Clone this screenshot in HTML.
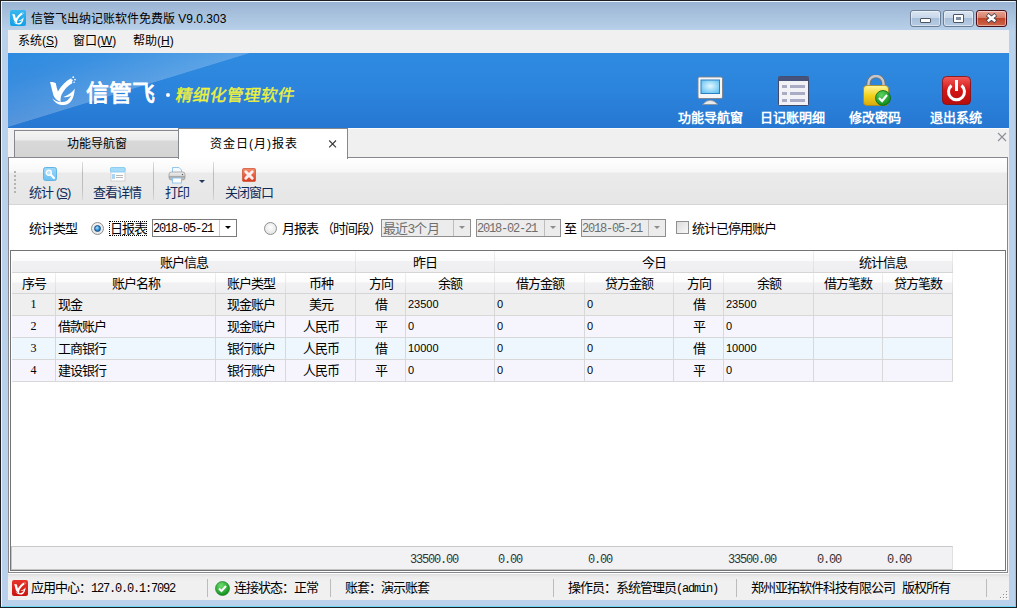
<!DOCTYPE html><html lang="zh-CN"><head><meta charset="utf-8"><style>
*{box-sizing:border-box;margin:0;padding:0}
html,body{width:1017px;height:608px;overflow:hidden;background:#b9d1ea;font-family:"Liberation Sans",sans-serif;font-size:12px;color:#000}
.abs{position:absolute}
.t{position:absolute;white-space:nowrap;line-height:14px}
.mono{font-family:"Liberation Mono",monospace}
.ss{font-size:13px;letter-spacing:-1px}
</style></head><body>
<div class="abs" style="left:0;top:0;width:1017px;height:608px;border:1px solid #1d1f22;background:#b9d1ea"></div>
<div class="abs" style="left:1px;top:1px;width:1015px;height:606px;border:1px solid #eef4fb;border-right-color:#6ad6f3;border-bottom-color:#6ad6f3;background:linear-gradient(#99b4d3 0px,#a9c2de 14px,#bad2ea 30px,#b9d1ea 40px)"></div>
<div class="abs" style="left:10px;top:10px;width:16px;height:16px;border-radius:2px;background:linear-gradient(#3ab7f0,#11a0e6)"></div>
<svg class="abs" style="left:10px;top:10px" width="16" height="16" viewBox="0 0 16 16"><path d="M2.3,4.1 C3.2,4 4.2,4.2 4.9,4.6 C5.2,6 5.5,7.3 5.9,8.4 C7.5,5.8 9.5,3.6 12,2.4 C12.3,3.2 12.5,3.9 12.5,4.6 C10.5,5.8 8.8,7.6 7.6,9.8 C7.2,10.8 7,11.8 7.2,13.2 C5.5,12.6 4.3,11.5 3.8,10 C3.2,8 2.8,6 2.3,4.1 Z" fill="#fff"/><path d="M3.3,11.6 C4.5,13.6 6.3,14.6 8.5,14.6 C11.3,14.6 13.3,12.2 13.6,7.2 C12.5,8.8 10.6,10.2 8.4,11 C9.8,11.3 11,10.9 12,10.3 C11,12.3 9.5,13.3 7.8,13.3 C6,13.3 4.5,12.6 3.3,11.6 Z" fill="#fff"/><circle cx="12.9" cy="2.2" r="0.45" fill="#fff" opacity="0.8"/><circle cx="13.7" cy="3.3" r="0.45" fill="#fff" opacity="0.8"/></svg>
<div class="t" style="left:31px;top:12px;font-size:12px;color:#000">信管飞出纳记账软件免费版 V9.0.303</div>
<div class="abs" style="left:910px;top:10px;width:31px;height:17px;border:1px solid #6d7e94;border-radius:3px;background:linear-gradient(#d9e5f2 0,#c8d8ea 45%,#a9bfd9 50%,#b7cce4 100%);box-shadow:inset 0 0 0 1px rgba(255,255,255,0.45)"></div>
<div class="abs" style="left:920px;top:18px;width:11px;height:5px;background:#fff;border:1px solid #4a5565;border-radius:1px"></div>
<div class="abs" style="left:943px;top:10px;width:31px;height:17px;border:1px solid #6d7e94;border-radius:3px;background:linear-gradient(#d9e5f2 0,#c8d8ea 45%,#a9bfd9 50%,#b7cce4 100%);box-shadow:inset 0 0 0 1px rgba(255,255,255,0.45)"></div>
<div class="abs" style="left:953px;top:14px;width:11px;height:9px;background:#fff;border:1px solid #4a5565;border-radius:1px"></div><div class="abs" style="left:956px;top:17px;width:5px;height:3px;background:#7d8ea4"></div>
<div class="abs" style="left:976px;top:10px;width:31px;height:17px;border:1px solid #4a0e18;border-radius:3px;background:linear-gradient(#e8a493 0,#d47f69 45%,#c0442a 50%,#d0664a 100%);box-shadow:inset 0 0 0 1px rgba(255,255,255,0.45)"></div>
<svg class="abs" style="left:976px;top:10px" width="31" height="17" viewBox="0 0 31 17"><path d="M11.2 4.6 L19.8 11.6 M19.8 4.6 L11.2 11.6" stroke="#3d3a48" stroke-width="4" stroke-linecap="butt"/><path d="M11.7 5 L19.3 11.2 M19.3 5 L11.7 11.2" stroke="#fff" stroke-width="2.6" stroke-linecap="butt"/></svg>
<div class="abs" style="left:8px;top:30px;width:1001px;height:570px;background:#f0f0f0"></div>
<div class="abs" style="left:8px;top:30px;width:1001px;height:23px;background:#f0f0f0"></div>
<div class="t" style="left:18px;top:34px;font-size:12px">系统(<u>S</u>)</div>
<div class="t" style="left:73px;top:34px;font-size:12px">窗口(<u>W</u>)</div>
<div class="t" style="left:133px;top:34px;font-size:12px">帮助(<u>H</u>)</div>
<div class="abs" style="left:8px;top:53px;width:1001px;height:75px;overflow:hidden;background:linear-gradient(163deg,rgba(255,255,255,0) 0%,rgba(255,255,255,0.06) 8%,rgba(255,255,255,0.22) 19.3%,rgba(255,255,255,0) 19.5%),linear-gradient(#2e8be0 0%,#2c84dc 50%,#2677d1 100%)"></div>
<svg class="abs" style="left:45px;top:73px" width="35" height="35" viewBox="0 0 16 16"><path d="M2.3,4.1 C3.2,4 4.2,4.2 4.9,4.6 C5.2,6 5.5,7.3 5.9,8.4 C7.5,5.8 9.5,3.6 12,2.4 C12.3,3.2 12.5,3.9 12.5,4.6 C10.5,5.8 8.8,7.6 7.6,9.8 C7.2,10.8 7,11.8 7.2,13.2 C5.5,12.6 4.3,11.5 3.8,10 C3.2,8 2.8,6 2.3,4.1 Z" fill="#fff"/><path d="M3.3,11.6 C4.5,13.6 6.3,14.6 8.5,14.6 C11.3,14.6 13.3,12.2 13.6,7.2 C12.5,8.8 10.6,10.2 8.4,11 C9.8,11.3 11,10.9 12,10.3 C11,12.3 9.5,13.3 7.8,13.3 C6,13.3 4.5,12.6 3.3,11.6 Z" fill="#fff"/><circle cx="12.9" cy="1.9" r="0.4" fill="#fff"/><circle cx="13.7" cy="3" r="0.4" fill="#fff"/><circle cx="12.4" cy="3.3" r="0.35" fill="#fff"/><circle cx="13.3" cy="4.2" r="0.35" fill="#fff"/><circle cx="12" cy="4.5" r="0.3" fill="#fff"/></svg>
<div class="t" style="left:86px;top:80px;font-size:23px;line-height:26px;letter-spacing:1px;color:#fff;font-weight:normal;-webkit-text-stroke:0.9px #fff;letter-spacing:0px">信管飞</div>
<div class="abs" style="left:166px;top:93px;width:4px;height:4px;background:#fff;border-radius:50%"></div>
<div class="t" style="left:174px;top:86px;font-size:16.5px;line-height:18px;color:#eef23a;font-weight:normal;-webkit-text-stroke:0.4px #eef23a;transform:skewX(-10deg);transform-origin:0 100%">精细化管理软件</div>
<svg class="abs" style="left:697px;top:76px" width="28" height="30" viewBox="0 0 28 30"><defs><radialGradient id="scr" cx="0.5" cy="0.45" r="0.7"><stop offset="0" stop-color="#e2f7ff"/><stop offset="1" stop-color="#5cc0f2"/></radialGradient></defs><rect x="1" y="1" width="24.5" height="21.5" rx="1.5" fill="#f4f6f8" stroke="#7d8186" stroke-width="0.9"/><rect x="3.5" y="3.5" width="19.5" height="14.5" fill="#2a7fc2"/><rect x="4.5" y="4.5" width="17.5" height="12.5" fill="url(#scr)"/><path d="M5.5 28.5 Q13.25 20 21 28.5 Z" fill="#e8eaec" stroke="#8a8e93" stroke-width="0.8"/></svg>
<div class="t" style="left:670px;width:80px;text-align:center;top:110px;font-size:13px;line-height:16px;color:#fff;font-weight:bold">功能导航窗</div>
<svg class="abs" style="left:778px;top:76px" width="31" height="30" viewBox="0 0 31 30"><rect x="0.5" y="0.5" width="30" height="29" rx="1" fill="#f2f2f6" stroke="#3f4a6a"/><rect x="0.5" y="0.5" width="30" height="4.5" fill="#46527a"/><rect x="4" y="9" width="5" height="3" fill="#a9acc4"/><rect x="12" y="9" width="15" height="3" fill="#a9acc4"/><rect x="4" y="16" width="5" height="3" fill="#a9acc4"/><rect x="12" y="16" width="15" height="3" fill="#a9acc4"/><rect x="4" y="23" width="5" height="3" fill="#a9acc4"/><rect x="12" y="23" width="15" height="3" fill="#a9acc4"/></svg>
<div class="t" style="left:752px;width:80px;text-align:center;top:110px;font-size:13px;line-height:16px;color:#fff;font-weight:bold">日记账明细</div>
<svg class="abs" style="left:862px;top:75px" width="30" height="32" viewBox="0 0 30 32"><defs><linearGradient id="lk" x1="0" y1="0" x2="0" y2="1"><stop offset="0" stop-color="#fff7a0"/><stop offset="0.5" stop-color="#f2d21c"/><stop offset="1" stop-color="#d9a90c"/></linearGradient><radialGradient id="gc" cx="0.4" cy="0.3" r="0.7"><stop offset="0" stop-color="#5fd35f"/><stop offset="1" stop-color="#0d8a1a"/></radialGradient></defs><path d="M6.5 12 V8.5 A7.5 7.5 0 0 1 21.5 8.5 V12" fill="none" stroke="#6f7378" stroke-width="4.2"/><path d="M6.5 12 V8.5 A7.5 7.5 0 0 1 21.5 8.5 V12" fill="none" stroke="#c4c7cb" stroke-width="2.4"/><rect x="1.5" y="10.5" width="25" height="20" rx="3.5" fill="url(#lk)" stroke="#b08a10" stroke-width="0.8"/><circle cx="21" cy="23" r="7.5" fill="url(#gc)" stroke="#0a6a12" stroke-width="0.8"/><path d="M17 23 L20 26 L25 20" fill="none" stroke="#fff" stroke-width="2.2"/></svg>
<div class="t" style="left:835px;width:80px;text-align:center;top:110px;font-size:13px;line-height:16px;color:#fff;font-weight:bold">修改密码</div>
<svg class="abs" style="left:942px;top:76px" width="30" height="30" viewBox="0 0 30 30"><defs><linearGradient id="pw" x1="0" y1="0" x2="0" y2="1"><stop offset="0" stop-color="#f25b5b"/><stop offset="0.5" stop-color="#d41414"/><stop offset="1" stop-color="#b50d0d"/></linearGradient></defs><rect x="0.5" y="0.5" width="28" height="28" rx="4" fill="url(#pw)" stroke="#8a0a0a" stroke-width="0.8"/><path d="M9.5 9.5 A8 8 0 1 0 19.5 9.5" fill="none" stroke="#fff" stroke-width="3"/><rect x="13" y="4" width="3" height="11" fill="#fff"/></svg>
<div class="t" style="left:916px;width:80px;text-align:center;top:110px;font-size:13px;line-height:16px;color:#fff;font-weight:bold">退出系统</div>
<div class="abs" style="left:8px;top:128px;width:1001px;height:30px;background:#f0f0f0;border-top:1px solid #fafafa"></div>
<div class="abs" style="left:14px;top:130px;width:165px;height:28px;border:1px solid #85888f;border-bottom:none;background:linear-gradient(#f4f4f4 0,#ececec 9px,#d8d8d8 10px,#d4d4d4 100%)"></div>
<div class="t" style="left:14px;width:165px;text-align:center;top:137px">功能导航窗</div>
<div class="abs" style="left:178px;top:128px;width:170px;height:31px;border:1px solid #85888f;border-bottom:none;background:#fff;z-index:2"></div>
<div class="t" style="left:210px;top:137px;z-index:3;letter-spacing:1px">资金日(月)报表</div>
<svg class="abs" style="left:328px;top:139px;z-index:3" width="10" height="10" viewBox="0 0 10 10"><path d="M1.2 1.5 L8 8.3 M8 1.5 L1.2 8.3" stroke="#3a3a3a" stroke-width="1.15"/></svg>
<svg class="abs" style="left:997px;top:132px" width="10" height="10" viewBox="0 0 10 10"><path d="M1 1 L9 9 M9 1 L1 9" stroke="#8a8f96" stroke-width="1.1"/></svg>
<div class="abs" style="left:8px;top:157px;width:1000px;height:416px;border:1px solid #85888f;border-bottom:none;background:#fff"></div>
<div class="abs" style="left:9px;top:158px;width:998px;height:47px;background:linear-gradient(#ffffff 0,#f7f7f7 14px,#ebebeb 15px,#e6e6e6 100%);border-bottom:1px solid #d5d5d5"></div>
<div class="abs" style="left:14px;top:171px;width:2px;height:22px;background:repeating-linear-gradient(#b4b4b4 0,#b4b4b4 2px,transparent 2px,transparent 4px)"></div>
<div class="abs" style="left:82px;top:162px;width:1px;height:38px;background:linear-gradient(#e0e0e0,#bdbdbd 30%,#bdbdbd 70%,#d8d8d8)"></div>
<div class="abs" style="left:153px;top:162px;width:1px;height:38px;background:linear-gradient(#e0e0e0,#bdbdbd 30%,#bdbdbd 70%,#d8d8d8)"></div>
<div class="abs" style="left:213px;top:162px;width:1px;height:38px;background:linear-gradient(#e0e0e0,#bdbdbd 30%,#bdbdbd 70%,#d8d8d8)"></div>
<div class="t ss" style="left:29px;top:186px;color:#0f2a58">统计<span style="margin-left:3px">(<u>S</u>)</span></div>
<div class="t ss" style="left:93px;top:186px;color:#0f2a58">查看详情</div>
<div class="t ss" style="left:165px;top:186px;color:#0f2a58">打印</div>
<div class="t ss" style="left:225px;top:186px;color:#0f2a58">关闭窗口</div>
<svg class="abs" style="left:43px;top:167px" width="14" height="14" viewBox="0 0 14 14"><defs><linearGradient id="sg" x1="0" y1="0" x2="0" y2="1"><stop offset="0" stop-color="#9fd8f8"/><stop offset="1" stop-color="#6cc0f2"/></linearGradient></defs><rect x="0.5" y="0.5" width="13" height="13" rx="2" fill="url(#sg)" stroke="#62b4e6"/><circle cx="5.8" cy="5.8" r="2.6" fill="#bfe6fb" stroke="#fff" stroke-width="1.3"/><path d="M7.8 7.8 L11 11" stroke="#fff" stroke-width="2.2" stroke-linecap="round"/></svg>
<svg class="abs" style="left:110px;top:167px" width="16" height="15" viewBox="0 0 16 15"><rect x="1" y="1.5" width="14" height="12.5" fill="#fff" stroke="#c8c8c8" stroke-width="0.8"/><rect x="0.5" y="0.5" width="14.5" height="4.5" rx="1" fill="#a7dcf8" stroke="#7cc4ee" stroke-width="0.8"/><rect x="2" y="7" width="3" height="5" fill="#a9d6f2"/><rect x="6" y="8" width="7" height="1" fill="#b8b8b8"/><rect x="6" y="10" width="7" height="1" fill="#b8b8b8"/></svg>
<svg class="abs" style="left:168px;top:166px" width="18" height="18" viewBox="0 0 18 18"><defs><linearGradient id="pb" x1="0" y1="0" x2="0" y2="1"><stop offset="0" stop-color="#f2f2f2"/><stop offset="0.45" stop-color="#d9d9d9"/><stop offset="0.55" stop-color="#a9a9a9"/><stop offset="1" stop-color="#c9c9c9"/></linearGradient></defs><path d="M4.5 1.5 H11 L13.5 4 V7 H4.5 Z" fill="#f4f9ff" stroke="#8cc0ec" stroke-width="0.9"/><rect x="1" y="6" width="16" height="8" rx="2.5" fill="url(#pb)" stroke="#9a9a9a" stroke-width="0.8"/><circle cx="14.5" cy="8.5" r="0.7" fill="#555"/><rect x="4.5" y="12" width="9" height="5" fill="#fff" stroke="#8cc0ec" stroke-width="0.9"/></svg>
<div class="abs" style="left:199px;top:180px;width:0;height:0;border-left:3px solid transparent;border-right:3px solid transparent;border-top:3px solid #1e395b"></div>
<svg class="abs" style="left:242px;top:168px" width="14" height="14" viewBox="0 0 14 14"><defs><linearGradient id="cx" x1="0" y1="0" x2="0" y2="1"><stop offset="0" stop-color="#f58a6a"/><stop offset="1" stop-color="#d83a1f"/></linearGradient></defs><rect x="0.5" y="0.5" width="13" height="13" rx="1.2" fill="url(#cx)" stroke="#d0573a" stroke-width="0.8"/><path d="M3.8 3.8 L10.2 10.2 M10.2 3.8 L3.8 10.2" stroke="#fbeeee" stroke-width="3" stroke-linecap="round"/></svg>
<div class="t ss" style="left:29px;top:222px">统计类型</div>
<div class="abs" style="left:91px;top:222px;width:13px;height:13px;border-radius:50%;border:1px solid #8e8f8f;background:radial-gradient(circle at 50% 40%,#ffffff,#dcdcdc)"></div>
<div class="abs" style="left:94px;top:225px;width:7px;height:7px;border-radius:50%;border:1px solid #15467e;background:radial-gradient(circle at 40% 35%,#aee4ff,#2a8fd6 55%,#0e5aa3)"></div>
<div class="abs" style="left:109px;top:221px;width:38px;height:15px;border:1px dotted #000"></div>
<div class="t ss" style="left:110px;top:222px">日报表</div>
<div class="abs" style="left:152px;top:219px;width:85px;height:18px;border:1px solid #7a7a7a;background:#fff"></div>
<div class="abs" style="left:219px;top:220px;width:1px;height:16px;background:#c8c8c8"></div>
<div class="abs" style="left:225px;top:226px;width:0;height:0;border-left:3px solid transparent;border-right:3px solid transparent;border-top:3px solid #000"></div>
<div class="t mono" style="left:153px;top:222px;font-size:12px;letter-spacing:-1.2px;color:#000">2018-05-21</div>
<div class="abs" style="left:264px;top:222px;width:13px;height:13px;border-radius:50%;border:1px solid #8e8f8f;background:radial-gradient(circle at 50% 40%,#ffffff,#dcdcdc)"></div>
<div class="t ss" style="left:282px;top:222px;letter-spacing:-1px">月报表<span style="margin-left:3px">（时间段）</span></div>
<div class="abs" style="left:381px;top:219px;width:90px;height:18px;border:1px solid #8e8e8e;background:#ececec"></div>
<div class="abs" style="left:453px;top:220px;width:1px;height:16px;background:#bdbdbd"></div>
<div class="abs" style="left:459px;top:226px;width:0;height:0;border-left:3px solid transparent;border-right:3px solid transparent;border-top:3px solid #8d8d8d"></div>
<div class="t" style="left:383px;top:222px;font-size:13px;letter-spacing:-0.6px;color:#6e6e6e">最近3个月</div>
<div class="abs" style="left:476px;top:219px;width:85px;height:18px;border:1px solid #8e8e8e;background:#ececec"></div>
<div class="abs" style="left:544px;top:220px;width:1px;height:16px;background:#bdbdbd"></div>
<div class="abs" style="left:550px;top:226px;width:0;height:0;border-left:3px solid transparent;border-right:3px solid transparent;border-top:3px solid #8d8d8d"></div>
<div class="t mono" style="left:477px;top:222px;font-size:12px;letter-spacing:-1.2px;color:#6e6e6e">2018-02-21</div>
<div class="t ss" style="left:564px;top:222px">至</div>
<div class="abs" style="left:581px;top:219px;width:85px;height:18px;border:1px solid #8e8e8e;background:#ececec"></div>
<div class="abs" style="left:648px;top:220px;width:1px;height:16px;background:#bdbdbd"></div>
<div class="abs" style="left:654px;top:226px;width:0;height:0;border-left:3px solid transparent;border-right:3px solid transparent;border-top:3px solid #8d8d8d"></div>
<div class="t mono" style="left:582px;top:222px;font-size:12px;letter-spacing:-1.2px;color:#6e6e6e">2018-05-21</div>
<div class="abs" style="left:676px;top:221px;width:13px;height:13px;border:1px solid #8e8f8f;background:linear-gradient(135deg,#dcdcdc,#f8f8f8)"></div>
<div class="t ss" style="left:692px;top:222px">统计已停用账户</div>
<div class="abs" style="left:10px;top:250px;width:996px;height:321px;border:1px solid #747474;background:#fff"></div>
<div class="abs" style="left:8px;top:572px;width:1000px;height:1px;background:#85888f"></div>
<div class="abs" style="left:12px;top:251px;width:344px;height:22px;background:linear-gradient(#ffffff 0,#fcfcfc 45%,#f1f1f3 50%,#efeff2 100%);border-bottom:1px solid #d5d5d5"></div>
<div class="abs" style="left:355px;top:251px;width:1px;height:21px;background:linear-gradient(#f0f0f0,#dcdcdc)"></div>
<div class="t ss" style="left:12px;width:343px;text-align:center;top:256px">账户信息</div>
<div class="abs" style="left:356px;top:251px;width:139px;height:22px;background:linear-gradient(#ffffff 0,#fcfcfc 45%,#f1f1f3 50%,#efeff2 100%);border-bottom:1px solid #d5d5d5"></div>
<div class="abs" style="left:494px;top:251px;width:1px;height:21px;background:linear-gradient(#f0f0f0,#dcdcdc)"></div>
<div class="t ss" style="left:356px;width:138px;text-align:center;top:256px">昨日</div>
<div class="abs" style="left:495px;top:251px;width:319px;height:22px;background:linear-gradient(#ffffff 0,#fcfcfc 45%,#f1f1f3 50%,#efeff2 100%);border-bottom:1px solid #d5d5d5"></div>
<div class="abs" style="left:813px;top:251px;width:1px;height:21px;background:linear-gradient(#f0f0f0,#dcdcdc)"></div>
<div class="t ss" style="left:495px;width:318px;text-align:center;top:256px">今日</div>
<div class="abs" style="left:814px;top:251px;width:139px;height:22px;background:linear-gradient(#ffffff 0,#fcfcfc 45%,#f1f1f3 50%,#efeff2 100%);border-bottom:1px solid #d5d5d5"></div>
<div class="abs" style="left:952px;top:251px;width:1px;height:21px;background:linear-gradient(#f0f0f0,#dcdcdc)"></div>
<div class="t ss" style="left:814px;width:138px;text-align:center;top:256px">统计信息</div>
<div class="abs" style="left:12px;top:273px;width:44px;height:21px;background:linear-gradient(#ffffff 0,#fcfcfc 45%,#f1f1f3 50%,#efeff2 100%);border-bottom:1px solid #d5d5d5"></div>
<div class="abs" style="left:55px;top:273px;width:1px;height:20px;background:linear-gradient(#f0f0f0,#dcdcdc)"></div>
<div class="t ss" style="left:12px;width:43px;text-align:center;top:277px">序号</div>
<div class="abs" style="left:56px;top:273px;width:160px;height:21px;background:linear-gradient(#ffffff 0,#fcfcfc 45%,#f1f1f3 50%,#efeff2 100%);border-bottom:1px solid #d5d5d5"></div>
<div class="abs" style="left:215px;top:273px;width:1px;height:20px;background:linear-gradient(#f0f0f0,#dcdcdc)"></div>
<div class="t ss" style="left:56px;width:159px;text-align:center;top:277px">账户名称</div>
<div class="abs" style="left:216px;top:273px;width:70px;height:21px;background:linear-gradient(#ffffff 0,#fcfcfc 45%,#f1f1f3 50%,#efeff2 100%);border-bottom:1px solid #d5d5d5"></div>
<div class="abs" style="left:285px;top:273px;width:1px;height:20px;background:linear-gradient(#f0f0f0,#dcdcdc)"></div>
<div class="t ss" style="left:216px;width:69px;text-align:center;top:277px">账户类型</div>
<div class="abs" style="left:286px;top:273px;width:70px;height:21px;background:linear-gradient(#ffffff 0,#fcfcfc 45%,#f1f1f3 50%,#efeff2 100%);border-bottom:1px solid #d5d5d5"></div>
<div class="abs" style="left:355px;top:273px;width:1px;height:20px;background:linear-gradient(#f0f0f0,#dcdcdc)"></div>
<div class="t ss" style="left:286px;width:69px;text-align:center;top:277px">币种</div>
<div class="abs" style="left:356px;top:273px;width:50px;height:21px;background:linear-gradient(#ffffff 0,#fcfcfc 45%,#f1f1f3 50%,#efeff2 100%);border-bottom:1px solid #d5d5d5"></div>
<div class="abs" style="left:405px;top:273px;width:1px;height:20px;background:linear-gradient(#f0f0f0,#dcdcdc)"></div>
<div class="t ss" style="left:356px;width:49px;text-align:center;top:277px">方向</div>
<div class="abs" style="left:406px;top:273px;width:89px;height:21px;background:linear-gradient(#ffffff 0,#fcfcfc 45%,#f1f1f3 50%,#efeff2 100%);border-bottom:1px solid #d5d5d5"></div>
<div class="abs" style="left:494px;top:273px;width:1px;height:20px;background:linear-gradient(#f0f0f0,#dcdcdc)"></div>
<div class="t ss" style="left:406px;width:88px;text-align:center;top:277px">余额</div>
<div class="abs" style="left:495px;top:273px;width:90px;height:21px;background:linear-gradient(#ffffff 0,#fcfcfc 45%,#f1f1f3 50%,#efeff2 100%);border-bottom:1px solid #d5d5d5"></div>
<div class="abs" style="left:584px;top:273px;width:1px;height:20px;background:linear-gradient(#f0f0f0,#dcdcdc)"></div>
<div class="t ss" style="left:495px;width:89px;text-align:center;top:277px">借方金额</div>
<div class="abs" style="left:585px;top:273px;width:89px;height:21px;background:linear-gradient(#ffffff 0,#fcfcfc 45%,#f1f1f3 50%,#efeff2 100%);border-bottom:1px solid #d5d5d5"></div>
<div class="abs" style="left:673px;top:273px;width:1px;height:20px;background:linear-gradient(#f0f0f0,#dcdcdc)"></div>
<div class="t ss" style="left:585px;width:88px;text-align:center;top:277px">贷方金额</div>
<div class="abs" style="left:674px;top:273px;width:50px;height:21px;background:linear-gradient(#ffffff 0,#fcfcfc 45%,#f1f1f3 50%,#efeff2 100%);border-bottom:1px solid #d5d5d5"></div>
<div class="abs" style="left:723px;top:273px;width:1px;height:20px;background:linear-gradient(#f0f0f0,#dcdcdc)"></div>
<div class="t ss" style="left:674px;width:49px;text-align:center;top:277px">方向</div>
<div class="abs" style="left:724px;top:273px;width:90px;height:21px;background:linear-gradient(#ffffff 0,#fcfcfc 45%,#f1f1f3 50%,#efeff2 100%);border-bottom:1px solid #d5d5d5"></div>
<div class="abs" style="left:813px;top:273px;width:1px;height:20px;background:linear-gradient(#f0f0f0,#dcdcdc)"></div>
<div class="t ss" style="left:724px;width:89px;text-align:center;top:277px">余额</div>
<div class="abs" style="left:814px;top:273px;width:69px;height:21px;background:linear-gradient(#ffffff 0,#fcfcfc 45%,#f1f1f3 50%,#efeff2 100%);border-bottom:1px solid #d5d5d5"></div>
<div class="abs" style="left:882px;top:273px;width:1px;height:20px;background:linear-gradient(#f0f0f0,#dcdcdc)"></div>
<div class="t ss" style="left:814px;width:68px;text-align:center;top:277px">借方笔数</div>
<div class="abs" style="left:883px;top:273px;width:70px;height:21px;background:linear-gradient(#ffffff 0,#fcfcfc 45%,#f1f1f3 50%,#efeff2 100%);border-bottom:1px solid #d5d5d5"></div>
<div class="abs" style="left:952px;top:273px;width:1px;height:20px;background:linear-gradient(#f0f0f0,#dcdcdc)"></div>
<div class="t ss" style="left:883px;width:69px;text-align:center;top:277px">贷方笔数</div>
<div class="abs" style="left:12px;top:294px;width:44px;height:22px;background:#efefef;border-right:1px solid #d8d8d8;border-bottom:1px solid #d8d8d8"></div>
<div class="t" style="left:12px;width:43px;text-align:center;top:297px;font-size:12px;font-family:'Liberation Serif',serif">1</div>
<div class="abs" style="left:56px;top:294px;width:160px;height:22px;background:#efefef;border-right:1px solid #d8d8d8;border-bottom:1px solid #d8d8d8"></div>
<div class="t ss" style="left:58px;top:298px">现金</div>
<div class="abs" style="left:216px;top:294px;width:70px;height:22px;background:#efefef;border-right:1px solid #d8d8d8;border-bottom:1px solid #d8d8d8"></div>
<div class="t ss" style="left:216px;width:69px;text-align:center;top:298px">现金账户</div>
<div class="abs" style="left:286px;top:294px;width:70px;height:22px;background:#efefef;border-right:1px solid #d8d8d8;border-bottom:1px solid #d8d8d8"></div>
<div class="t ss" style="left:286px;width:69px;text-align:center;top:298px">美元</div>
<div class="abs" style="left:356px;top:294px;width:50px;height:22px;background:#efefef;border-right:1px solid #d8d8d8;border-bottom:1px solid #d8d8d8"></div>
<div class="t ss" style="left:356px;width:49px;text-align:center;top:298px">借</div>
<div class="abs" style="left:406px;top:294px;width:89px;height:22px;background:#efefef;border-right:1px solid #d8d8d8;border-bottom:1px solid #d8d8d8"></div>
<div class="t" style="left:408px;top:297px;font-size:11px">23500</div>
<div class="abs" style="left:495px;top:294px;width:90px;height:22px;background:#efefef;border-right:1px solid #d8d8d8;border-bottom:1px solid #d8d8d8"></div>
<div class="t" style="left:497px;top:297px;font-size:11px">0</div>
<div class="abs" style="left:585px;top:294px;width:89px;height:22px;background:#efefef;border-right:1px solid #d8d8d8;border-bottom:1px solid #d8d8d8"></div>
<div class="t" style="left:587px;top:297px;font-size:11px">0</div>
<div class="abs" style="left:674px;top:294px;width:50px;height:22px;background:#efefef;border-right:1px solid #d8d8d8;border-bottom:1px solid #d8d8d8"></div>
<div class="t ss" style="left:674px;width:49px;text-align:center;top:298px">借</div>
<div class="abs" style="left:724px;top:294px;width:90px;height:22px;background:#efefef;border-right:1px solid #d8d8d8;border-bottom:1px solid #d8d8d8"></div>
<div class="t" style="left:726px;top:297px;font-size:11px">23500</div>
<div class="abs" style="left:814px;top:294px;width:69px;height:22px;background:#efefef;border-right:1px solid #d8d8d8;border-bottom:1px solid #d8d8d8"></div>
<div class="abs" style="left:883px;top:294px;width:70px;height:22px;background:#efefef;border-right:1px solid #d8d8d8;border-bottom:1px solid #d8d8d8"></div>
<div class="abs" style="left:12px;top:316px;width:44px;height:22px;background:#f6f5fd;border-right:1px solid #d8d8d8;border-bottom:1px solid #d8d8d8"></div>
<div class="t" style="left:12px;width:43px;text-align:center;top:319px;font-size:12px;font-family:'Liberation Serif',serif">2</div>
<div class="abs" style="left:56px;top:316px;width:160px;height:22px;background:#f6f5fd;border-right:1px solid #d8d8d8;border-bottom:1px solid #d8d8d8"></div>
<div class="t ss" style="left:58px;top:320px">借款账户</div>
<div class="abs" style="left:216px;top:316px;width:70px;height:22px;background:#f6f5fd;border-right:1px solid #d8d8d8;border-bottom:1px solid #d8d8d8"></div>
<div class="t ss" style="left:216px;width:69px;text-align:center;top:320px">现金账户</div>
<div class="abs" style="left:286px;top:316px;width:70px;height:22px;background:#f6f5fd;border-right:1px solid #d8d8d8;border-bottom:1px solid #d8d8d8"></div>
<div class="t ss" style="left:286px;width:69px;text-align:center;top:320px">人民币</div>
<div class="abs" style="left:356px;top:316px;width:50px;height:22px;background:#f6f5fd;border-right:1px solid #d8d8d8;border-bottom:1px solid #d8d8d8"></div>
<div class="t ss" style="left:356px;width:49px;text-align:center;top:320px">平</div>
<div class="abs" style="left:406px;top:316px;width:89px;height:22px;background:#f6f5fd;border-right:1px solid #d8d8d8;border-bottom:1px solid #d8d8d8"></div>
<div class="t" style="left:408px;top:319px;font-size:11px">0</div>
<div class="abs" style="left:495px;top:316px;width:90px;height:22px;background:#f6f5fd;border-right:1px solid #d8d8d8;border-bottom:1px solid #d8d8d8"></div>
<div class="t" style="left:497px;top:319px;font-size:11px">0</div>
<div class="abs" style="left:585px;top:316px;width:89px;height:22px;background:#f6f5fd;border-right:1px solid #d8d8d8;border-bottom:1px solid #d8d8d8"></div>
<div class="t" style="left:587px;top:319px;font-size:11px">0</div>
<div class="abs" style="left:674px;top:316px;width:50px;height:22px;background:#f6f5fd;border-right:1px solid #d8d8d8;border-bottom:1px solid #d8d8d8"></div>
<div class="t ss" style="left:674px;width:49px;text-align:center;top:320px">平</div>
<div class="abs" style="left:724px;top:316px;width:90px;height:22px;background:#f6f5fd;border-right:1px solid #d8d8d8;border-bottom:1px solid #d8d8d8"></div>
<div class="t" style="left:726px;top:319px;font-size:11px">0</div>
<div class="abs" style="left:814px;top:316px;width:69px;height:22px;background:#f6f5fd;border-right:1px solid #d8d8d8;border-bottom:1px solid #d8d8d8"></div>
<div class="abs" style="left:883px;top:316px;width:70px;height:22px;background:#f6f5fd;border-right:1px solid #d8d8d8;border-bottom:1px solid #d8d8d8"></div>
<div class="abs" style="left:12px;top:338px;width:44px;height:22px;background:#eff7fe;border-right:1px solid #d8d8d8;border-bottom:1px solid #d8d8d8"></div>
<div class="t" style="left:12px;width:43px;text-align:center;top:341px;font-size:12px;font-family:'Liberation Serif',serif">3</div>
<div class="abs" style="left:56px;top:338px;width:160px;height:22px;background:#eff7fe;border-right:1px solid #d8d8d8;border-bottom:1px solid #d8d8d8"></div>
<div class="t ss" style="left:58px;top:342px">工商银行</div>
<div class="abs" style="left:216px;top:338px;width:70px;height:22px;background:#eff7fe;border-right:1px solid #d8d8d8;border-bottom:1px solid #d8d8d8"></div>
<div class="t ss" style="left:216px;width:69px;text-align:center;top:342px">银行账户</div>
<div class="abs" style="left:286px;top:338px;width:70px;height:22px;background:#eff7fe;border-right:1px solid #d8d8d8;border-bottom:1px solid #d8d8d8"></div>
<div class="t ss" style="left:286px;width:69px;text-align:center;top:342px">人民币</div>
<div class="abs" style="left:356px;top:338px;width:50px;height:22px;background:#eff7fe;border-right:1px solid #d8d8d8;border-bottom:1px solid #d8d8d8"></div>
<div class="t ss" style="left:356px;width:49px;text-align:center;top:342px">借</div>
<div class="abs" style="left:406px;top:338px;width:89px;height:22px;background:#eff7fe;border-right:1px solid #d8d8d8;border-bottom:1px solid #d8d8d8"></div>
<div class="t" style="left:408px;top:341px;font-size:11px">10000</div>
<div class="abs" style="left:495px;top:338px;width:90px;height:22px;background:#eff7fe;border-right:1px solid #d8d8d8;border-bottom:1px solid #d8d8d8"></div>
<div class="t" style="left:497px;top:341px;font-size:11px">0</div>
<div class="abs" style="left:585px;top:338px;width:89px;height:22px;background:#eff7fe;border-right:1px solid #d8d8d8;border-bottom:1px solid #d8d8d8"></div>
<div class="t" style="left:587px;top:341px;font-size:11px">0</div>
<div class="abs" style="left:674px;top:338px;width:50px;height:22px;background:#eff7fe;border-right:1px solid #d8d8d8;border-bottom:1px solid #d8d8d8"></div>
<div class="t ss" style="left:674px;width:49px;text-align:center;top:342px">借</div>
<div class="abs" style="left:724px;top:338px;width:90px;height:22px;background:#eff7fe;border-right:1px solid #d8d8d8;border-bottom:1px solid #d8d8d8"></div>
<div class="t" style="left:726px;top:341px;font-size:11px">10000</div>
<div class="abs" style="left:814px;top:338px;width:69px;height:22px;background:#eff7fe;border-right:1px solid #d8d8d8;border-bottom:1px solid #d8d8d8"></div>
<div class="abs" style="left:883px;top:338px;width:70px;height:22px;background:#eff7fe;border-right:1px solid #d8d8d8;border-bottom:1px solid #d8d8d8"></div>
<div class="abs" style="left:12px;top:360px;width:44px;height:22px;background:#f6f5fd;border-right:1px solid #d8d8d8;border-bottom:1px solid #d8d8d8"></div>
<div class="t" style="left:12px;width:43px;text-align:center;top:363px;font-size:12px;font-family:'Liberation Serif',serif">4</div>
<div class="abs" style="left:56px;top:360px;width:160px;height:22px;background:#f6f5fd;border-right:1px solid #d8d8d8;border-bottom:1px solid #d8d8d8"></div>
<div class="t ss" style="left:58px;top:364px">建设银行</div>
<div class="abs" style="left:216px;top:360px;width:70px;height:22px;background:#f6f5fd;border-right:1px solid #d8d8d8;border-bottom:1px solid #d8d8d8"></div>
<div class="t ss" style="left:216px;width:69px;text-align:center;top:364px">银行账户</div>
<div class="abs" style="left:286px;top:360px;width:70px;height:22px;background:#f6f5fd;border-right:1px solid #d8d8d8;border-bottom:1px solid #d8d8d8"></div>
<div class="t ss" style="left:286px;width:69px;text-align:center;top:364px">人民币</div>
<div class="abs" style="left:356px;top:360px;width:50px;height:22px;background:#f6f5fd;border-right:1px solid #d8d8d8;border-bottom:1px solid #d8d8d8"></div>
<div class="t ss" style="left:356px;width:49px;text-align:center;top:364px">平</div>
<div class="abs" style="left:406px;top:360px;width:89px;height:22px;background:#f6f5fd;border-right:1px solid #d8d8d8;border-bottom:1px solid #d8d8d8"></div>
<div class="t" style="left:408px;top:363px;font-size:11px">0</div>
<div class="abs" style="left:495px;top:360px;width:90px;height:22px;background:#f6f5fd;border-right:1px solid #d8d8d8;border-bottom:1px solid #d8d8d8"></div>
<div class="t" style="left:497px;top:363px;font-size:11px">0</div>
<div class="abs" style="left:585px;top:360px;width:89px;height:22px;background:#f6f5fd;border-right:1px solid #d8d8d8;border-bottom:1px solid #d8d8d8"></div>
<div class="t" style="left:587px;top:363px;font-size:11px">0</div>
<div class="abs" style="left:674px;top:360px;width:50px;height:22px;background:#f6f5fd;border-right:1px solid #d8d8d8;border-bottom:1px solid #d8d8d8"></div>
<div class="t ss" style="left:674px;width:49px;text-align:center;top:364px">平</div>
<div class="abs" style="left:724px;top:360px;width:90px;height:22px;background:#f6f5fd;border-right:1px solid #d8d8d8;border-bottom:1px solid #d8d8d8"></div>
<div class="t" style="left:726px;top:363px;font-size:11px">0</div>
<div class="abs" style="left:814px;top:360px;width:69px;height:22px;background:#f6f5fd;border-right:1px solid #d8d8d8;border-bottom:1px solid #d8d8d8"></div>
<div class="abs" style="left:883px;top:360px;width:70px;height:22px;background:#f6f5fd;border-right:1px solid #d8d8d8;border-bottom:1px solid #d8d8d8"></div>
<div class="abs" style="left:11px;top:546px;width:942px;height:24px;background:#f2f2f4;border-top:1px solid #c8c8c8;border-right:1px solid #e0e0e0;box-shadow:inset 1px 0 0 #c4c4c4,inset 0 -1px 0 #c4c4c4"></div>
<div class="t mono" style="left:410px;top:553px;font-size:12px;letter-spacing:-1.2px;color:#333">33500.00</div>
<div class="t mono" style="left:498px;top:553px;font-size:12px;letter-spacing:-1.2px;color:#333">0.00</div>
<div class="t mono" style="left:588px;top:553px;font-size:12px;letter-spacing:-1.2px;color:#333">0.00</div>
<div class="t mono" style="left:728px;top:553px;font-size:12px;letter-spacing:-1.2px;color:#333">33500.00</div>
<div class="t mono" style="left:817px;top:553px;font-size:12px;letter-spacing:-1.2px;color:#333">0.00</div>
<div class="t mono" style="left:887px;top:553px;font-size:12px;letter-spacing:-1.2px;color:#333">0.00</div>
<div class="abs" style="left:8px;top:573px;width:1001px;height:27px;background:linear-gradient(#ffffff 0,#ffffff 1px,#dedede 1px,#ececec 4px,#f0f0f0 8px,#f0f0f0 100%)"></div>
<div class="abs" style="left:12px;top:580px;width:16px;height:16px;border-radius:2px;background:linear-gradient(#e8352b,#c8140e)"></div><svg class="abs" style="left:12px;top:580px" width="16" height="16" viewBox="0 0 16 16"><path d="M2.3,4.1 C3.2,4 4.2,4.2 4.9,4.6 C5.2,6 5.5,7.3 5.9,8.4 C7.5,5.8 9.5,3.6 12,2.4 C12.3,3.2 12.5,3.9 12.5,4.6 C10.5,5.8 8.8,7.6 7.6,9.8 C7.2,10.8 7,11.8 7.2,13.2 C5.5,12.6 4.3,11.5 3.8,10 C3.2,8 2.8,6 2.3,4.1 Z" fill="#fff"/><path d="M3.3,11.6 C4.5,13.6 6.3,14.6 8.5,14.6 C11.3,14.6 13.3,12.2 13.6,7.2 C12.5,8.8 10.6,10.2 8.4,11 C9.8,11.3 11,10.9 12,10.3 C11,12.3 9.5,13.3 7.8,13.3 C6,13.3 4.5,12.6 3.3,11.6 Z" fill="#fff"/><circle cx="12.9" cy="2.2" r="0.45" fill="#fff" opacity="0.8"/><circle cx="13.7" cy="3.3" r="0.45" fill="#fff" opacity="0.8"/></svg>
<div class="t ss" style="left:31px;top:581px">应用中心：<span class="mono" style="font-size:12px;letter-spacing:-1.2px">127.0.0.1:7092</span></div>
<div class="abs" style="left:207px;top:579px;width:1px;height:18px;background:#bcbcbc"></div>
<div class="abs" style="left:330px;top:579px;width:1px;height:18px;background:#bcbcbc"></div>
<div class="abs" style="left:553px;top:579px;width:1px;height:18px;background:#bcbcbc"></div>
<div class="abs" style="left:736px;top:579px;width:1px;height:18px;background:#bcbcbc"></div>
<div class="abs" style="left:986px;top:579px;width:1px;height:18px;background:#bcbcbc"></div>
<svg class="abs" style="left:215px;top:581px" width="15" height="15" viewBox="0 0 15 15"><defs><radialGradient id="gk" cx="0.4" cy="0.3" r="0.7"><stop offset="0" stop-color="#6fdc6f"/><stop offset="1" stop-color="#10901e"/></radialGradient></defs><circle cx="7.5" cy="7.5" r="7" fill="url(#gk)" stroke="#0b7414" stroke-width="0.6"/><path d="M4 7.5 L6.5 10 L11 5" fill="none" stroke="#fff" stroke-width="2"/></svg>
<div class="t ss" style="left:234px;top:581px">连接状态：正常</div>
<div class="t ss" style="left:345px;top:581px">账套：演示账套</div>
<div class="t ss" style="left:568px;top:581px">操作员：系统管理员<span class="mono" style="font-size:12px;letter-spacing:-1.2px">(admin)</span></div>
<div class="t ss" style="left:751px;top:581px">郑州亚拓软件科技有限公司<span style="margin-left:7px">版权所有</span></div>
<div class="abs" style="left:1006px;top:591px;width:1px;height:1px;background:#8f8f8f;box-shadow:1px 1px 0 #fff"></div>
<div class="abs" style="left:1003px;top:594px;width:1px;height:1px;background:#8f8f8f;box-shadow:1px 1px 0 #fff"></div>
<div class="abs" style="left:1006px;top:594px;width:1px;height:1px;background:#8f8f8f;box-shadow:1px 1px 0 #fff"></div>
<div class="abs" style="left:1000px;top:597px;width:1px;height:1px;background:#8f8f8f;box-shadow:1px 1px 0 #fff"></div>
<div class="abs" style="left:1003px;top:597px;width:1px;height:1px;background:#8f8f8f;box-shadow:1px 1px 0 #fff"></div>
<div class="abs" style="left:1006px;top:597px;width:1px;height:1px;background:#8f8f8f;box-shadow:1px 1px 0 #fff"></div>
</body></html>
